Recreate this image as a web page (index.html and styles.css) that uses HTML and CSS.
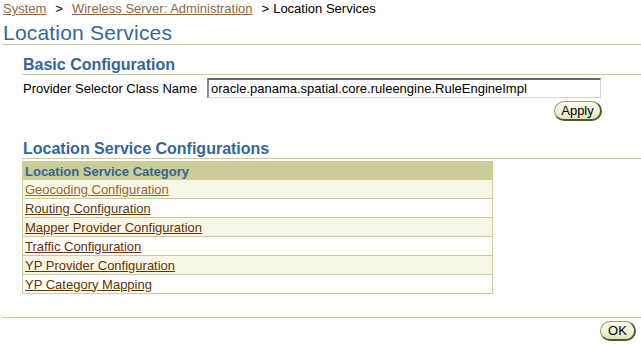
FILE: index.html
```html
<!DOCTYPE html>
<html>
<head>
<meta charset="utf-8">
<title>Location Services</title>
<link rel="stylesheet" href="styles.css">
</head>
<body>
<div class="crumbs">
  <a class="visited" href="#">System</a><span class="sep">&gt;</span><a class="visited" href="#">Wireless Server: Administration</a><span class="sep sep-last">&gt;</span><span class="current">Location Services</span>
</div>
<h1 class="title">Location Services</h1>

<div class="section">
  <h2 class="heading">Basic Configuration</h2>
  <div class="form">
    <div class="form-row">
      <label class="label" for="cls">Provider Selector Class Name</label>
      <input class="field" id="cls" type="text" value="oracle.panama.spatial.core.ruleengine.RuleEngineImpl">
    </div>
    <div class="actions">
      <button class="btn btn-apply" type="button">Apply</button>
    </div>
  </div>
</div>

<div class="section section-configs">
  <h2 class="heading">Location Service Configurations</h2>
  <table class="grid">
    <thead>
      <tr><th>Location Service Category</th></tr>
    </thead>
    <tbody>
      <tr class="alt"><td><a class="visited" href="#">Geocoding Configuration</a></td></tr>
      <tr><td><a href="#">Routing Configuration</a></td></tr>
      <tr class="alt"><td><a href="#">Mapper Provider Configuration</a></td></tr>
      <tr><td><a href="#">Traffic Configuration</a></td></tr>
      <tr class="alt"><td><a href="#">YP Provider Configuration</a></td></tr>
      <tr><td><a href="#">YP Category Mapping</a></td></tr>
    </tbody>
  </table>
</div>

<div class="footer">
  <button class="btn btn-ok" type="button">OK</button>
</div>
</body>
</html>
```

FILE: styles.css
```css
html, body {
  margin: 0;
  padding: 0;
  background: #ffffff;
}

body {
  width: 641px;
  padding: 0 0 0 2px;
  box-sizing: border-box;
  font-family: "Liberation Sans", Arial, sans-serif;
  font-size: 13px;
  color: #000000;
}

a {
  color: #663300;
  text-decoration: underline;
}

a.visited {
  color: #996633;
}

.crumbs {
  padding: 1px 0 0 1px;
  line-height: 15px;
  height: 16px;
}

.sep {
  padding: 0 9px;
  color: #000000;
}

.sep-last {
  padding: 0 4px 0 9px;
}

.title {
  margin: 4px 0 0 0;
  padding-left: 1px;
  font-size: 21px;
  font-weight: normal;
  letter-spacing: 0.2px;
  line-height: 23px;
  color: #336699;
  border-bottom: 1px solid #cccc99;
}

.section {
  margin-left: 20px;
}

.heading {
  margin: 10px 0 0 0;
  padding-left: 1px;
  font-size: 16px;
  font-weight: bold;
  line-height: 19px;
  color: #336699;
  border-bottom: 1px solid #cccc99;
}

.form {
  width: 580px;
}

.form-row {
  display: flex;
  align-items: center;
  margin-top: 3px;
  height: 20px;
}

.label {
  width: 185px;
  padding-left: 1px;
  box-sizing: border-box;
  line-height: 15px;
}

.field {
  width: 394px;
  height: 20px;
  box-sizing: border-box;
  margin: 0;
  padding: 0 0 0 2px;
  font-family: "Liberation Sans", Arial, sans-serif;
  font-size: 13px;
  color: #000000;
  background: #ffffff;
  border-top: 2px solid #6a6a6a;
  border-left: 2px solid #8c8c8c;
  border-right: 1px solid #d4d4d4;
  border-bottom: 1px solid #d4d4d4;
}

.actions {
  display: flex;
  justify-content: flex-end;
  margin-top: 3px;
}

.btn {
  height: 20px;
  box-sizing: border-box;
  margin: 0;
  padding: 0 6px;
  font-family: "Liberation Sans", Arial, sans-serif;
  font-size: 13px;
  line-height: 15px;
  color: #000000;
  border-radius: 10px;
  background: linear-gradient(#fffff6, #efefd6 60%, #e2e2c0);
  border-top: 1px solid #9a9a6a;
  border-left: 1px solid #9a9a6a;
  border-right: 2px solid #55552e;
  border-bottom: 2px solid #55552e;
}

.btn-apply {
  width: 48px;
}

.section-configs .heading {
  margin-top: 18px;
}

.grid {
  margin-top: 2px;
  width: 471px;
  border-collapse: collapse;
  border: 1px solid #cccc99;
}

.grid th {
  height: 18px;
  padding: 0 0 0 2px;
  text-align: left;
  font-size: 13px;
  font-weight: bold;
  line-height: 15px;
  color: #336699;
  background: #cccc99;
}

.grid td {
  height: 18px;
  padding: 0 0 0 2px;
  line-height: 15px;
  border-bottom: 1px solid #cccc99;
  background: #ffffff;
}

.grid tr.alt td {
  background: #f7f7e7;
}

.footer {
  margin-top: 23px;
  border-top: 1px solid #cccc99;
  display: flex;
  justify-content: flex-end;
  padding: 3px 5px 0 0;
}

.btn-ok {
  width: 36px;
  padding: 0;
}
```
